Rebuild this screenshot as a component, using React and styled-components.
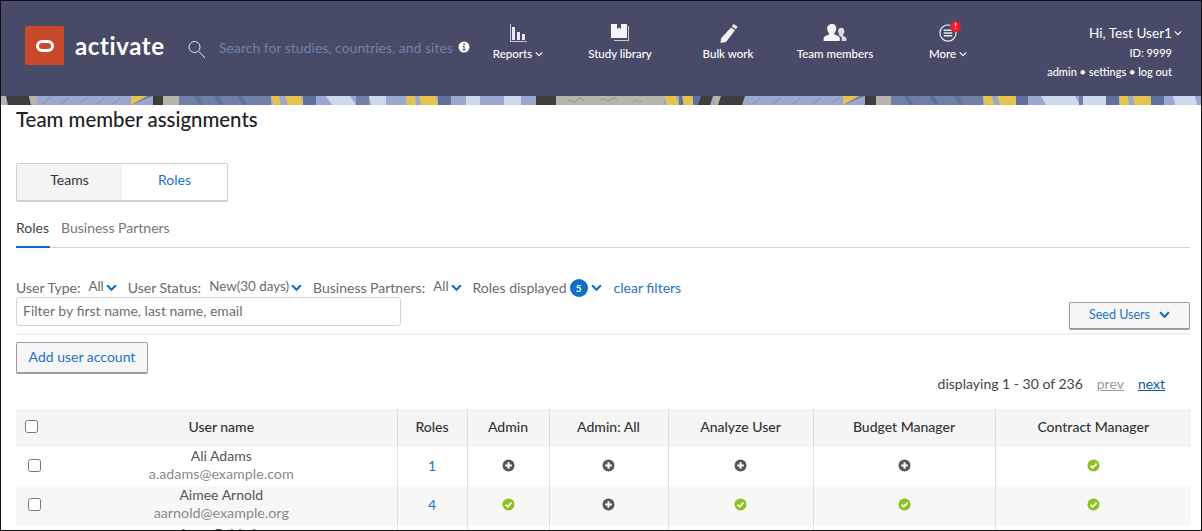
import React from "react";
import styled, { createGlobalStyle } from "styled-components";

const GlobalStyle = createGlobalStyle`
  html, body { margin: 0; padding: 0; background: #fff; }
  body { font-family: Lato, "Noto Sans", sans-serif; color: #333; overflow: hidden; }
  * { box-sizing: border-box; }
`;

const Frame = styled.div`
  width: 1202px;
  height: 531px;
  border: 1px solid #111;
  overflow: hidden;
  background: #fff;
`;

const Header = styled.header`
  height: 95px;
  background: #474b68;
  display: flex;
  align-items: flex-start;
  color: #fff;
`;

const Brand = styled.div`
  flex: none;
  display: flex;
  align-items: center;
  gap: 11px;
  margin: 25px 0 0 24px;
  width: 163px;
`;

const LogoBox = styled.div`
  width: 39px;
  height: 39px;
  background: #c9472b;
  border-radius: 2px;
  display: flex;
  align-items: center;
  justify-content: center;
`;

const LogoRing = styled.span`
  width: 18px;
  height: 12px;
  border: 3px solid #fff;
  border-radius: 6px;
`;

const BrandName = styled.span`
  font-size: 24px;
  font-weight: 700;
  letter-spacing: 0.6px;
`;

const SearchBlock = styled.div`
  flex: none;
  display: flex;
  align-items: center;
  width: 279px;
  margin-top: 34px;
  color: #7082aa;
  font-size: 14px;
  gap: 13px;
`;

const SearchText = styled.span`
  white-space: nowrap;
`;

const SearchGlass = styled.svg`
  flex: none;
  margin-top: 6px;
`;

const InfoIcon = styled.svg`
  flex: none;
  margin-left: -8px;
`;

const Nav = styled.nav`
  display: flex;
  flex: none;
`;

const NavItem = styled.div`
  width: ${(p) => p.$w}px;
  height: 95px;
  padding-top: 22px;
  display: flex;
  flex-direction: column;
  align-items: center;
  font-size: 11.5px;
  font-weight: 500;
  white-space: nowrap;
`;

const NavIcon = styled.div`
  position: relative;
  height: 20px;
  margin-bottom: 4px;
  display: flex;
  align-items: center;
`;

const Alert = styled.span`
  position: absolute;
  top: -2px;
  right: -4px;
  width: 11px;
  height: 11px;
  border-radius: 50%;
  background: #e8202a;
  color: #fff;
  font-size: 8px;
  font-weight: 700;
  line-height: 11px;
  text-align: center;
`;

const NavLabel = styled.span`
  display: flex;
  align-items: center;
  gap: 3px;
  line-height: 14px;
`;

const UserBlock = styled.div`
  margin-left: auto;
  padding: 24px 29px 0 0;
  display: flex;
  flex-direction: column;
  align-items: flex-end;
`;

const Hello = styled.div`
  display: flex;
  align-items: center;
  gap: 2px;
  font-size: 13.6px;
  line-height: 16px;
  margin-right: -10px;
  white-space: nowrap;
`;

const UserLine = styled.div`
  font-size: 11px;
  line-height: 14px;
  margin-top: 5px;
  font-weight: 500;
  white-space: nowrap;
`;

const Strip = styled.svg`
  display: block;
  width: 1200px;
  height: 9px;
`;

const Main = styled.main`
  padding: 0 11px 0 15px;
`;

const Title = styled.h1`
  margin: 0;
  height: 58px;
  padding-top: 3px;
  font-size: 20.4px;
  line-height: 22px;
  font-weight: 500;
  color: #222;
`;

const Toggle = styled.div`
  display: flex;
  width: 212px;
  height: 39px;
  border: 1px solid #d0d0d0;
  border-bottom-width: 2px;
  border-radius: 2px;
`;

const ToggleOption = styled.div`
  flex: 1;
  display: flex;
  align-items: center;
  justify-content: center;
  font-size: 14px;
  padding-bottom: 5px;
  background: ${(p) => (p.$on ? "#f4f4f4" : "#fff")};
  color: ${(p) => (p.$on ? "#333" : "#1f73c4")};
`;

const Tabs = styled.div`
  display: flex;
  gap: 11px;
  height: 34px;
  margin-top: 12px;
  border-bottom: 1px solid #cfd3d6;
  font-size: 14px;
`;

const Tab = styled.div`
  height: 34px;
  padding: 5px 1px 0 0;
  color: ${(p) => (p.$on ? "#444" : "#777")};
  border-bottom: ${(p) => (p.$on ? "2px solid #0f6fc6" : "none")};
`;

const FilterArea = styled.div`
  display: flex;
  justify-content: space-between;
  align-items: flex-end;
  margin-top: 30px;
`;

const FilterColumn = styled.div`
  display: flex;
  flex-direction: column;
`;

const FilterRow = styled.div`
  display: flex;
  align-items: center;
  height: 18px;
  font-size: 14px;
  color: #6b6b6b;
  white-space: nowrap;
`;

const Filter = styled.span`
  display: flex;
  align-items: center;
  margin-right: ${(p) => p.$gap}px;
`;

const FilterValue = styled.span`
  margin: -2px 1px 0 8px;
  display: inline-block;
  font-size: 13.4px;
`;

const Badge = styled.span`
  width: 18px;
  height: 18px;
  margin: 2px 2px 0 3px;
  border-radius: 50%;
  background: #0f6fc6;
  color: #fff;
  font-size: 10px;
  font-weight: 700;
  line-height: 18px;
  text-align: center;
`;

const ClearLink = styled.a`
  color: #1f73c4;
`;

const SearchInput = styled.input`
  width: 385px;
  height: 29px;
  margin-top: 1px;
  padding: 0 6px 3px;
  border: 1px solid #d4d4d4;
  border-radius: 3px;
  font: 14px Lato, "Noto Sans", sans-serif;
  &::placeholder { color: #6f6f6f; opacity: 1; }
`;

const Button = styled.button`
  display: flex;
  align-items: center;
  justify-content: center;
  gap: 8px;
  width: ${(p) => p.$w}px;
  height: ${(p) => p.$h}px;
  padding: 0 0 2px;
  background: #f6f6f6;
  border: 1px solid #9d9d9d;
  border-bottom-width: 2px;
  border-radius: 2px;
  color: #1f73c4;
  font: ${(p) => p.$size}px Lato, "Noto Sans", sans-serif;
`;

const SeedButton = styled(Button)`
  margin-bottom: -4px;
`;

const Rule = styled.hr`
  margin: 7px 0 7px;
  border: 0;
  border-top: 2px solid #f1f1f1;
`;

const Pager = styled.div`
  display: flex;
  justify-content: flex-end;
  gap: 14px;
  height: 34px;
  padding: 0 25px 0 0;
  font-size: 14px;
  line-height: 18px;
  margin-top: 1px;
  color: #444;
`;

const PagerLink = styled.a`
  text-decoration: underline;
  color: ${(p) => (p.$off ? "#999" : "#0f5c9e")};
`;

const Table = styled.table`
  width: 1175px;
  border-collapse: collapse;
  table-layout: fixed;
`;

const HeadCell = styled.th`
  height: 38px;
  padding: 0 0 3px;
  background: #f5f5f5;
  border-left: ${(p) => (p.$first ? "none" : "1px solid #dcdcdc")};
  font-size: 14px;
  font-weight: 500;
  color: #333;
  vertical-align: middle;
`;

const Cell = styled.td`
  height: 39px;
  padding: 0 0 2px;
  background: ${(p) => (p.$odd ? "#f7f7f7" : "#fff")};
  border-left: ${(p) => (p.$first ? "none" : "1px solid #e2e2e2")};
  text-align: center;
  vertical-align: middle;
  line-height: 0;
`;

const RoleCount = styled.span`
  font-size: 14px;
  line-height: 18px;
  color: #1f73c4;
`;

const CheckRow = styled.div`
  display: flex;
  align-items: center;
  padding-left: ${(p) => p.$left}px;
`;

const Box = styled.input.attrs({ type: "checkbox" })`
  appearance: none;
  width: 13px;
  height: 13px;
  margin: 0;
  flex: none;
  background: #fff;
  border: 1px solid #777;
  border-radius: 2.5px;
`;

const NameCol = styled.div`
  flex: 1;
  text-align: center;
  padding-left: 8px;
`;

const NameColRow = styled(NameCol)`
  padding-left: 5px;
  margin-top: -2px;
`;

const UserName = styled.div`
  font-size: 14px;
  line-height: 18px;
  color: #555;
`;

const UserMail = styled.div`
  font-size: 14.3px;
  line-height: 18px;
  color: #8a8a8a;
`;

const RoleIcon = styled.svg`
  display: inline-block;
  vertical-align: middle;
`;

const BlueMark = styled.svg`
  flex: none;
  margin-left: 1px;
`;

const Chevron = () => (
  <svg width="8" height="8" viewBox="0 0 10 10" fill="none" stroke="#fff" strokeWidth="1.400">
    <path d="M1 3l4 4 4-4" />
  </svg>
);

const BlueChevron = () => (
  <BlueMark width="11" height="11" viewBox="0 0 10 10" fill="none" stroke="#0f6fc6" strokeWidth="1.900">
    <path d="M1 3l4 4 4-4" />
  </BlueMark>
);

const Plus = () => (
  <RoleIcon width="13" height="13" viewBox="0 0 13 13">
    <circle cx="6.500" cy="6.500" r="6" fill="#555" />
    <path d="M6.500 3.200v6.600M3.200 6.500h6.600" stroke="#fff" strokeWidth="2" />
  </RoleIcon>
);

const Check = () => (
  <RoleIcon width="13" height="13" viewBox="0 0 13 13">
    <circle cx="6.500" cy="6.500" r="6" fill="#8cc21f" />
    <path d="M3.500 6.700l2.200 2.100 3.900-4.100" stroke="#fff" strokeWidth="1.800" fill="none" />
  </RoleIcon>
);

const P = "#9aa8cf"; // periwinkle
const B = "#6f7fa8"; // slate blue
const D = "#5f6f9e"; // deep blue
const Y = "#e6c24f"; // yellow
const K = "#3f3d3a"; // near black
const G = "#b7b4ac"; // stone
const L = "#cdd7ee"; // pale blue

// x, top width, colour, slant, bottom width: the banner artwork, left to right
const stripShapes = [
  [0, 5, G, 0], [5, 23, K, 2], [28, 8, G, 2], [36, 94, P, 0],
  [130, 22, B, 0, 0], [130, 16, Y, 0, 0], [152, 10, K, 0], [162, 16, G, 0],
  [178, 92, B, 0], [270, 8, Y, 2], [284, 16, Y, 3], [302, 13, D, 0],
  [315, 10, P, 0], [325, 24, L, 6], [355, 13, B, 0], [368, 17, L, 2], [385, 20, P, 0],
  [405, 9, Y, 1], [418, 17, Y, 2], [437, 13, D, 0], [450, 15, P, 0], [465, 14, L, 0],
  [479, 24, P, 0], [503, 17, L, 0], [520, 15, P, 0], [535, 20, K, 0], [555, 108, G, 0],
  [663, 12, Y, 3], [678, 4, D, 0], [681, 10, Y, 2], [692, 8, D, 0], [700, 12, K, -3],
  [712, 6, G, 3], [720, 24, K, -3], [744, 96, P, 0],
  [842, 22, B, 0, 0], [842, 16, Y, 0, 0], [864, 11, K, 0], [875, 15, G, 0],
  [890, 92, B, 0], [982, 9, Y, 2], [996, 18, Y, 3], [1015, 12, D, 0], [1027, 13, P, 0],
  [1040, 34, L, 5], [1078, 4, B, 0], [1082, 23, L, 0], [1105, 13, D, 0], [1118, 9, Y, 1],
  [1132, 17, Y, 2], [1150, 13, D, 0], [1163, 9, P, 0], [1172, 22, L, 2], [1196, 4, P, 0],
];

const Banner = () => (
  <Strip viewBox="0 0 1200 9" preserveAspectRatio="none">
    <rect width="1200" height="9" fill={P} />
    {stripShapes.map(([x, w, c, s, b]) => {
      const bottom = b === undefined ? w : b;
      return <polygon key={`${x}-${w}`} fill={c} points={`${x},0 ${x + w},0 ${x + s + bottom},9 ${x + s},9`} />;
    })}
    <path
      d="M42 8l8-7M60 8l8-7M78 8l8-7M96 8l8-7M112 8l8-7M752 8l8-7M772 8l8-7M792 8l8-7M812 8l8-7M830 8l8-7"
      stroke="#7f8cb4"
      strokeWidth="1"
      fill="none"
    />
    <path d="M195 0l6 9M215 0l6 9M238 0l6 9M905 0l6 9M930 0l6 9M955 0l6 9" stroke={D} strokeWidth="4" fill="none" />
    <path
      d="M566 6c3-5 6 3 9-1s5-3 8 0M600 4c3-4 6 3 9 0s5-3 8 0M632 6c3-5 6 2 9-1"
      stroke="#98958d"
      strokeWidth="1"
      fill="none"
    />
  </Strip>
);

const columns = [381, 70, 82, 119, 145, 182, 196];
const headers = ["Roles", "Admin", "Admin: All", "Analyze User", "Budget Manager", "Contract Manager"];
const users = [
  { name: "Ali Adams", mail: "a.adams@example.com", roles: 1, marks: [0, 0, 0, 0, 1], odd: false },
  { name: "Aimee Arnold", mail: "aarnold@example.org", roles: 4, marks: [1, 0, 1, 1, 1], odd: true },
  // only the top of this row shows above the fold
  { name: "Anna Baldwin", mail: "abaldwin@example.com", marks: [null, null, null, null, null], odd: false },
];

export default function App() {
  return (
    <Frame>
      <GlobalStyle />
      <Header>
        <Brand>
          <LogoBox><LogoRing /></LogoBox>
          <BrandName>activate</BrandName>
        </Brand>
        <SearchBlock>
          <SearchGlass width="18" height="18" viewBox="0 0 18 18" fill="none" stroke="#e4e6ef" strokeWidth="1">
            <circle cx="6.500" cy="6" r="5.500" />
            <path d="M11 10.500l6 6.500" />
          </SearchGlass>
          <SearchText>Search for studies, countries, and sites</SearchText>
          <InfoIcon width="12" height="12" viewBox="0 0 12 12">
            <circle cx="6" cy="6" r="5.500" fill="#fff" />
            <path d="M4.600 5h2v3.400h1v1H4.500v-1h1V6h-.9zM5.300 2.400h1.600V4H5.300z" fill="#474b68" />
          </InfoIcon>
        </SearchBlock>
        <Nav>
          <NavItem $w={102}>
            <NavIcon>
              <svg width="17" height="19" viewBox="0 0 17 19" fill="#e8e9f0">
                <path d="M0 0h1v17h16v1H0z" opacity=".8" />
                <path d="M2 3h3v13H2zM7 8h3v8H7zM12 10h3v6h-3z" />
              </svg>
            </NavIcon>
            <NavLabel>Reports <Chevron /></NavLabel>
          </NavItem>
          <NavItem $w={102}>
            <NavIcon>
              <svg width="19" height="19" viewBox="0 0 19 19" fill="#f4f4f8">
                <path d="M0 0h6v5l2-1.500L10 5V0h6v14H0z" />
                <path d="M17 2h1v15H3v-1h14z" opacity=".75" />
              </svg>
            </NavIcon>
            <NavLabel>Study library</NavLabel>
          </NavItem>
          <NavItem $w={114}>
            <NavIcon>
              <svg width="19" height="19" viewBox="0 0 19 19" fill="#f4f4f8">
                <path d="M14.500 0l4 2.800-1.600 2.400-4-2.800zM12 3.500l4 2.800L7 18l-5.500 1 .6-4.700z" />
              </svg>
            </NavIcon>
            <NavLabel>Bulk work</NavLabel>
          </NavItem>
          <NavItem $w={100}>
            <NavIcon>
              <svg width="25" height="18" viewBox="0 0 25 19" fill="#f4f4f8">
                <path d="M9 0c3 0 4.300 2 4.300 4.600 0 2.400-1 4.100-2 5.200v1.400c2.500.9 5 1.800 5.700 3.300V18H0v-3.500c.7-1.500 3.200-2.400 5.700-3.300V9.800c-1-1.100-2-2.800-2-5.200C3.700 2 6 0 9 0z" />
                <path d="M18.500 4c2.200 0 3.300 1.700 3.300 3.600 0 1.800-.8 3.100-1.500 3.900v1c1.500.6 3 1.200 3.700 2.300V18h-5v-3.800c-.8-1-2-1.700-3-2.300.5-.6 0-1 .2-1.500-.9-.9-1-2.300-1-3.300C15.200 5.600 16.500 4 18.500 4z" opacity=".85" />
              </svg>
            </NavIcon>
            <NavLabel>Team members</NavLabel>
          </NavItem>
          <NavItem $w={126}>
            <NavIcon>
              <svg width="18" height="18" viewBox="0 0 19 19" fill="none" stroke="#e4e6ef">
                <circle cx="9.500" cy="9.500" r="8.500" strokeWidth="1.300" />
                <path d="M5 6.500h9M5 9.500h9M5 12.500h9" strokeWidth="1.600" />
              </svg>
              <Alert>!</Alert>
            </NavIcon>
            <NavLabel>More <Chevron /></NavLabel>
          </NavItem>
        </Nav>
        <UserBlock>
          <Hello>Hi, Test User1 <Chevron /></Hello>
          <UserLine>ID: 9999</UserLine>
          <UserLine>admin • settings • log out</UserLine>
        </UserBlock>
      </Header>
      <Banner />
      <Main>
        <Title>Team member assignments</Title>
        <Toggle>
          <ToggleOption $on>Teams</ToggleOption>
          <ToggleOption>Roles</ToggleOption>
        </Toggle>
        <Tabs>
          <Tab $on>Roles</Tab>
          <Tab>Business Partners</Tab>
        </Tabs>
        <FilterArea>
          <FilterColumn>
            <FilterRow>
              <Filter $gap={11}>User Type:<FilterValue>All</FilterValue><BlueChevron /></Filter>
              <Filter $gap={11}>User Status:<FilterValue>New(30 days)</FilterValue><BlueChevron /></Filter>
              <Filter $gap={11}>Business Partners:<FilterValue>All</FilterValue><BlueChevron /></Filter>
              <Filter $gap={12}>Roles displayed<Badge>5</Badge><BlueChevron /></Filter>
              <ClearLink>clear filters</ClearLink>
            </FilterRow>
            <SearchInput placeholder="Filter by first name, last name, email" />
          </FilterColumn>
          <SeedButton $w={121} $h={28} $size={12.500}>Seed Users <BlueChevron /></SeedButton>
        </FilterArea>
        <Rule />
        <Button $w={132} $h={32} $size={14}>Add user account</Button>
        <Pager>
          <span>displaying 1 - 30 of 236</span>
          <PagerLink $off>prev</PagerLink>
          <PagerLink>next</PagerLink>
        </Pager>
        <Table>
          <colgroup>
            {columns.map((w, i) => <col key={i} width={w} />)}
          </colgroup>
          <thead>
            <tr>
              <HeadCell $first>
                <CheckRow $left={9}>
                  <Box />
                  <NameCol>User name</NameCol>
                </CheckRow>
              </HeadCell>
              {headers.map((h) => <HeadCell key={h}>{h}</HeadCell>)}
            </tr>
          </thead>
          <tbody>
            {users.map((u) => (
              <tr key={u.name}>
                <Cell $first $odd={u.odd}>
                  <CheckRow $left={12}>
                    <Box />
                    <NameColRow>
                      <UserName>{u.name}</UserName>
                      <UserMail>{u.mail}</UserMail>
                    </NameColRow>
                  </CheckRow>
                </Cell>
                <Cell $odd={u.odd}>{u.roles && <RoleCount>{u.roles}</RoleCount>}</Cell>
                {u.marks.map((m, i) => (
                  <Cell key={i} $odd={u.odd}>
                    {m === null ? null : m ? <Check /> : <Plus />}
                  </Cell>
                ))}
              </tr>
            ))}
          </tbody>
        </Table>
      </Main>
    </Frame>
  );
}
